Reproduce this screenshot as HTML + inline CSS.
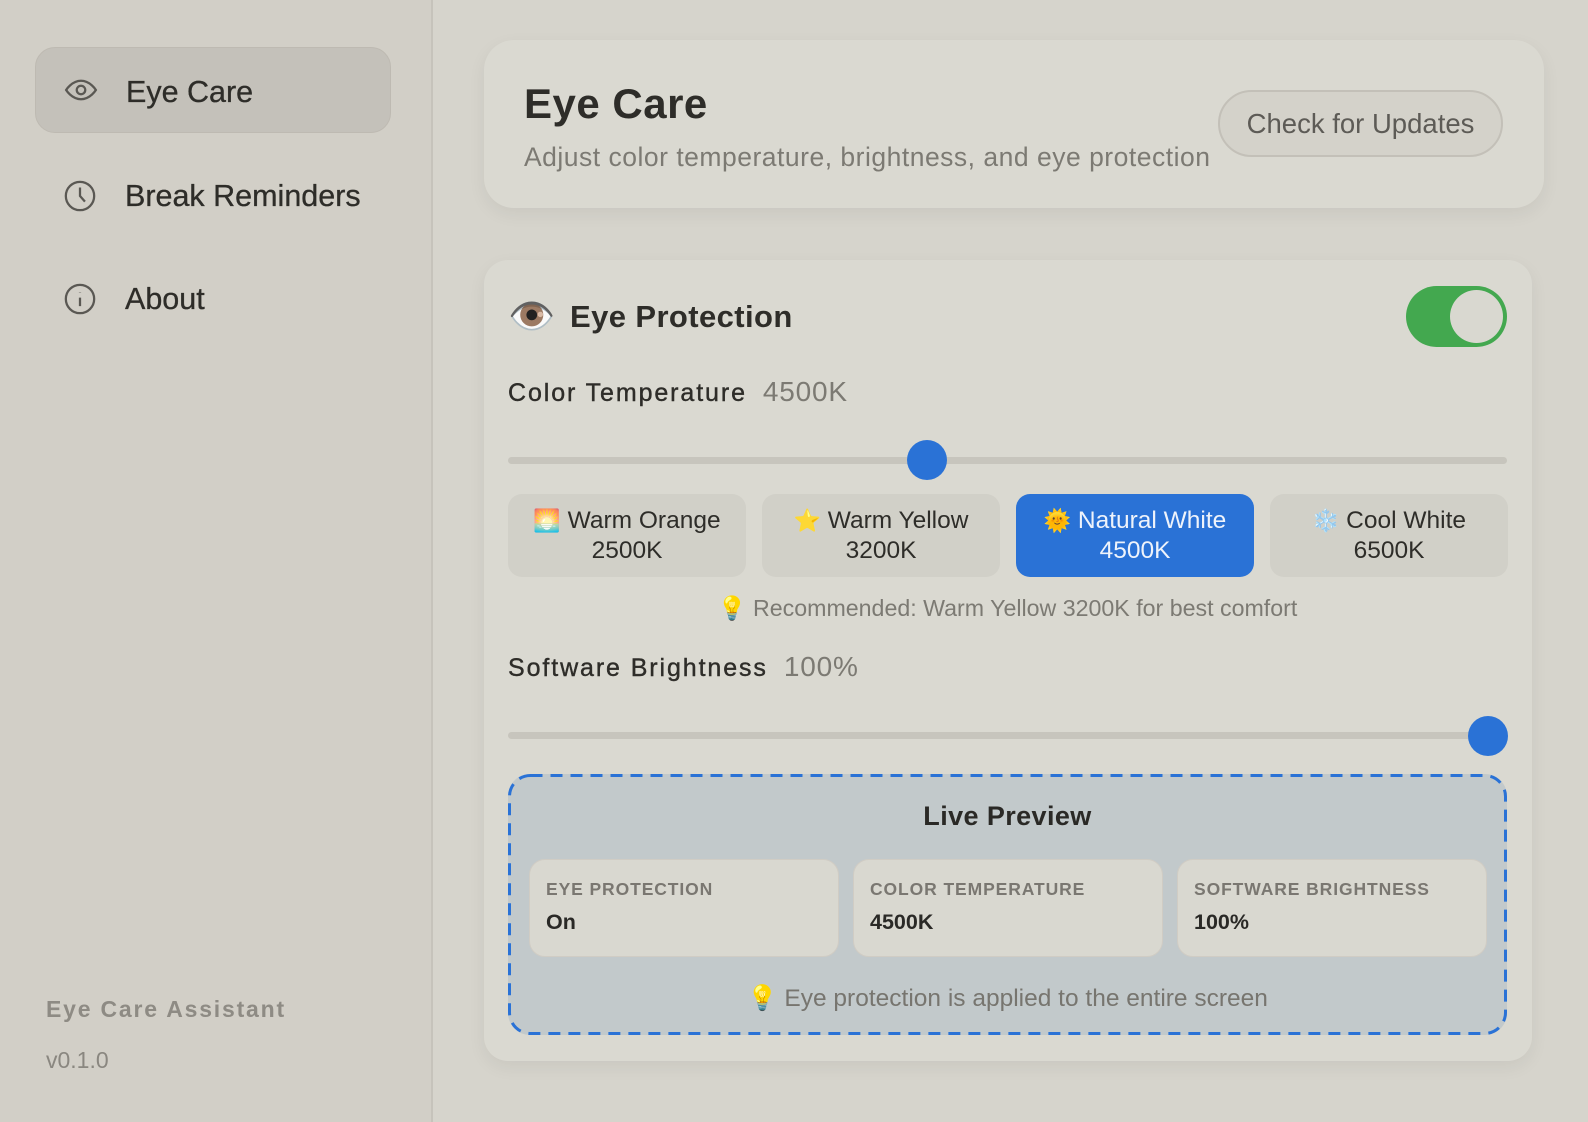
<!DOCTYPE html>
<html><head><meta charset="utf-8"><style>
*{box-sizing:border-box;margin:0;padding:0}
body{width:1588px;height:1122px;overflow:hidden;background:#d6d4cc;font-family:"Liberation Sans","DejaVu Sans",sans-serif;color:#2e2d29;position:relative}
.abs{position:absolute}
.side{left:0;top:0;width:433px;height:1122px;background:#d2cfc7;border-right:2px solid #c6c3bb}
.nav{left:35px;width:356px;height:86px;border-radius:20px;display:flex;align-items:center;font-size:30.5px;color:#2e2d29;-webkit-text-stroke:0.3px #2e2d29}
.nav svg{margin-left:28px;margin-right:28px}
.card{background:#dad9d1;border-radius:30px;box-shadow:0 6px 18px rgba(0,0,0,.06)}
.lbl{font-size:25px;color:#2e2d29;letter-spacing:1.9px;-webkit-text-stroke:0.4px #2e2d29}
.lbl span{color:#7c7a73;margin-left:16px;-webkit-text-stroke:0;letter-spacing:0.8px}
.track{height:7px;background:#c7c5bd;border-radius:4px}
.thumb{width:40px;height:40px;border-radius:50%;background:#2a72d6}
.preset{top:494px;width:238px;height:83px;border-radius:14px;background:#d1d0c8;text-align:center;font-size:24.5px;line-height:30px;padding-top:12px}
.stat{top:859px;width:310px;height:98px;border-radius:16px;background:#d9d8d0;border:1px solid #d0ccc4;padding:19px 16px}
.stat .k{font-size:17.5px;font-weight:bold;color:#7a7771;letter-spacing:0.9px}
.stat .v{font-size:21.5px;font-weight:bold;color:#2a2926;margin-top:10px}
</style></head><body>
<div class="abs side"></div>
<div class="abs nav" style="top:47px;background:#c4c1ba;border:1px solid #bebab2">
<svg width="34" height="34" viewBox="0 0 24 24" fill="none" stroke="#5a5853" stroke-width="1.6"><path d="M1.5 12S5.5 5.5 12 5.5 22.5 12 22.5 12 18.5 18.5 12 18.5 1.5 12 1.5 12z"/><circle cx="12" cy="12" r="3"/></svg><span style="margin-top:4px">Eye Care</span></div>
<div class="abs nav" style="top:153px">
<svg width="34" height="34" viewBox="0 0 24 24" fill="none" stroke="#5a5853" stroke-width="1.6"><circle cx="12" cy="12" r="10"/><path d="M12 6v6l3.5 4"/></svg>Break Reminders</div>
<div class="abs nav" style="top:256px">
<svg width="34" height="34" viewBox="0 0 24 24" fill="none" stroke="#5a5853" stroke-width="1.6"><circle cx="12" cy="12" r="10"/><path d="M12 11v6M12 7.2v.3"/></svg>About</div>
<div class="abs" style="left:46px;top:996px;font-size:23px;font-weight:bold;color:#8e8b84;letter-spacing:1.8px">Eye Care Assistant</div>
<div class="abs" style="left:46px;top:1047px;font-size:23px;color:#8a8780">v0.1.0</div>

<div class="abs card" style="left:484px;top:40px;width:1060px;height:168px"></div>
<div class="abs" style="left:524px;top:80px;font-size:42px;font-weight:bold;color:#2e2d29;letter-spacing:0.5px">Eye Care</div>
<div class="abs" style="left:524px;top:142px;font-size:26.5px;color:#7c7a73;letter-spacing:0.5px">Adjust color temperature, brightness, and eye protection</div>
<div class="abs" style="left:1218px;top:90px;width:285px;height:67px;border-radius:34px;border:2px solid #c3c0b8;background:#d4d2ca;font-size:27.5px;color:#5d5b56;text-align:center;line-height:63px">Check for Updates</div>

<div class="abs card" style="left:484px;top:260px;width:1048px;height:801px;border-radius:24px"></div>
<div class="abs" style="left:508px;top:296px;font-size:38px;line-height:42px">👁️</div>
<div class="abs" style="left:570px;top:299px;font-size:31px;font-weight:bold;color:#2e2d29;letter-spacing:0.4px">Eye Protection</div>
<div class="abs" style="left:1406px;top:286px;width:101px;height:61px;border-radius:31px;background:#43a84f"></div>
<div class="abs" style="left:1450px;top:290px;width:53px;height:53px;border-radius:50%;background:#d9d8d0"></div>

<div class="abs lbl" style="left:508px;top:376px">Color Temperature<span style="font-size:28px">4500K</span></div>
<div class="abs track" style="left:508px;top:457px;width:999px"></div>
<div class="abs thumb" style="left:907px;top:440px"></div>

<div class="abs preset" style="left:508px"><span style="font-size:22px">🌅</span> Warm Orange<br>2500K</div>
<div class="abs preset" style="left:762px"><span style="font-size:22px">⭐</span> Warm Yellow<br>3200K</div>
<div class="abs preset" style="left:1016px;background:#2a72d6;color:#eef3fb"><span style="font-size:22px">🌞</span> Natural White<br>4500K</div>
<div class="abs preset" style="left:1270px"><span style="font-size:22px">❄️</span> Cool White<br>6500K</div>
<div class="abs" style="left:508px;width:999px;top:594px;text-align:center;font-size:23.2px;color:#7c7a73">💡 Recommended: Warm Yellow 3200K for best comfort</div>

<div class="abs lbl" style="left:508px;top:651px">Software Brightness<span style="font-size:28px">100%</span></div>
<div class="abs track" style="left:508px;top:732px;width:999px"></div>
<div class="abs thumb" style="left:1468px;top:716px"></div>

<div class="abs" style="left:508px;top:774px;width:999px;height:261px;border-radius:22px;background:#c2c9cb"></div>
<svg class="abs" style="left:508px;top:774px" width="999" height="261"><rect x="1.5" y="1.5" width="996" height="258" rx="21" fill="none" stroke="#2a72d6" stroke-width="3" stroke-dasharray="12 8"/></svg>
<div class="abs" style="left:508px;width:999px;top:801px;text-align:center;font-size:27px;font-weight:bold;color:#2a2926;letter-spacing:0.4px">Live Preview</div>
<div class="abs stat" style="left:529px"><div class="k">EYE PROTECTION</div><div class="v">On</div></div>
<div class="abs stat" style="left:853px"><div class="k">COLOR TEMPERATURE</div><div class="v">4500K</div></div>
<div class="abs stat" style="left:1177px"><div class="k">SOFTWARE BRIGHTNESS</div><div class="v">100%</div></div>
<div class="abs" style="left:508px;width:999px;top:983px;text-align:center;font-size:24.5px;color:#77756f">💡 Eye protection is applied to the entire screen</div>
</body></html>
